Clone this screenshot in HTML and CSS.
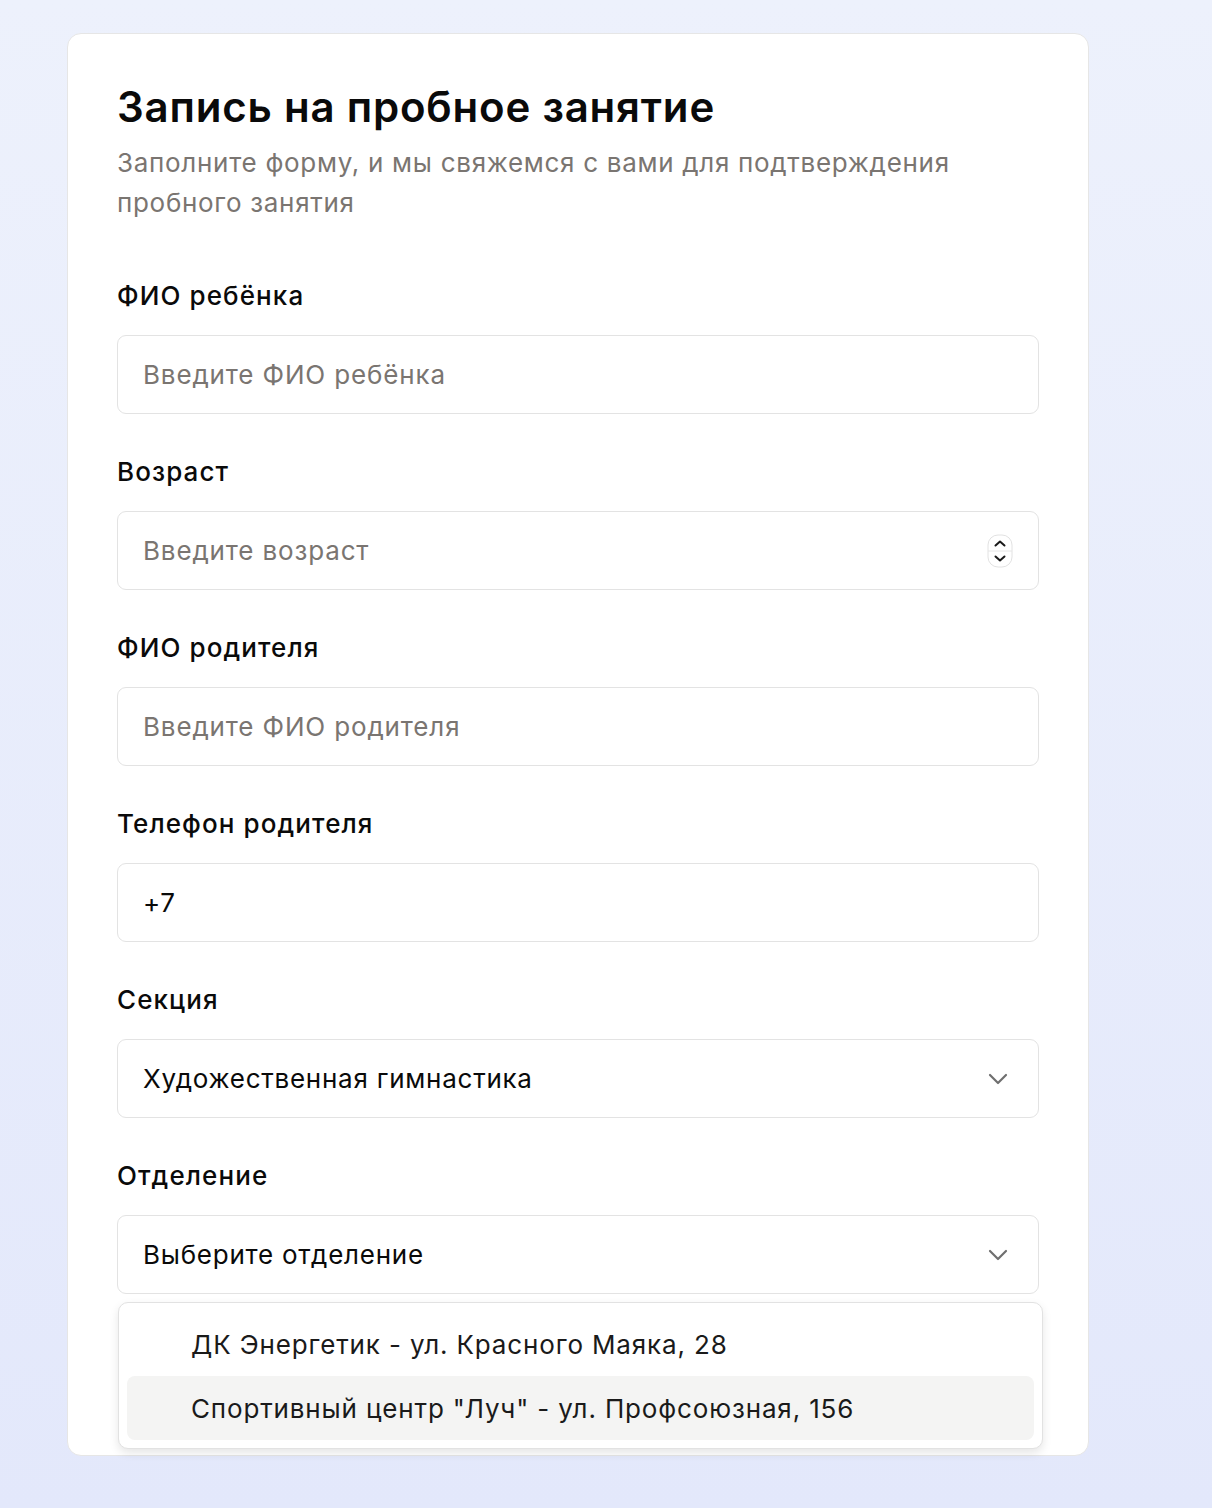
FILE: index.html
```html
<!DOCTYPE html>
<html lang="ru">
<head>
<meta charset="utf-8">
<title>Запись на пробное занятие</title>
<link rel="stylesheet" href="styles.css">
</head>
<body>
<main class="page">
  <form class="card">
    <h1 class="title">Запись на пробное занятие</h1>
    <p class="subtitle">Заполните форму, и мы свяжемся с вами для подтверждения пробного занятия</p>

    <div class="field">
      <label class="label">ФИО ребёнка</label>
      <div class="input"><span class="placeholder">Введите ФИО ребёнка</span></div>
    </div>

    <div class="field">
      <label class="label">Возраст</label>
      <div class="input">
        <span class="placeholder">Введите возраст</span>
        <span class="spinner">
          <svg width="26" height="34" viewBox="0 0 26 34">
            <rect x="1" y="1" width="24" height="32" rx="10" fill="#fff" stroke="#e2e2e2"/>
            <line x1="1" y1="17" x2="25" y2="17" stroke="#e6e6e6"/>
            <path d="M8.5 11.5 L13 7.5 L17.5 11.5" fill="none" stroke="#1a1a1a" stroke-width="2" stroke-linecap="round" stroke-linejoin="round"/>
            <path d="M8.5 22.5 L13 26.5 L17.5 22.5" fill="none" stroke="#1a1a1a" stroke-width="2" stroke-linecap="round" stroke-linejoin="round"/>
          </svg>
        </span>
      </div>
    </div>

    <div class="field">
      <label class="label">ФИО родителя</label>
      <div class="input"><span class="placeholder">Введите ФИО родителя</span></div>
    </div>

    <div class="field">
      <label class="label">Телефон родителя</label>
      <div class="input"><span class="value">+7</span></div>
    </div>

    <div class="field">
      <label class="label">Секция</label>
      <div class="input select">
        <span class="value">Художественная гимнастика</span>
        <svg class="chev" width="20" height="12" viewBox="0 0 20 12"><path d="M2 2 L10 10 L18 2" fill="none" stroke="#6f6f6f" stroke-width="2.2" stroke-linecap="round" stroke-linejoin="round"/></svg>
      </div>
    </div>

    <div class="field last">
      <label class="label">Отделение</label>
      <div class="input select">
        <span class="value">Выберите отделение</span>
        <svg class="chev" width="20" height="12" viewBox="0 0 20 12"><path d="M2 2 L10 10 L18 2" fill="none" stroke="#6f6f6f" stroke-width="2.2" stroke-linecap="round" stroke-linejoin="round"/></svg>
      </div>
      <ul class="menu">
        <li class="option">ДК Энергетик - ул. Красного Маяка, 28</li>
        <li class="option active">Спортивный центр "Луч" - ул. Профсоюзная, 156</li>
      </ul>
    </div>
  </form>
</main>
</body>
</html>
```

FILE: styles.css
```css
* { box-sizing: border-box; }
html, body { margin: 0; padding: 0; }
body {
  min-height: 1508px;
  background: linear-gradient(180deg, #edf1fc 0%, #e3e8fb 100%);
  font-family: Inter, "Noto Sans", sans-serif;
  color: #0a0a0a;
}
.page {
  padding: 33px 0 0 67px;
}
.card {
  width: 1022px;
  background: #fff;
  border: 1px solid #e6e6e6;
  border-radius: 14px;
  padding: 48px 49px 161px;
  display: flex;
  flex-direction: column;
}
.title {
  margin: 0;
  font-size: 42px;
  font-weight: 600;
  letter-spacing: 0.8px;
  line-height: 50px;
  color: #0a0a0a;
}
.subtitle {
  margin: 11px 0 0;
  font-size: 26px;
  line-height: 40px;
  color: #7a7571;
  max-width: 880px;
  letter-spacing: 0.7px;
}
.field {
  display: flex;
  flex-direction: column;
  margin-top: 55px;
  position: relative;
}
.field + .field { margin-top: 40px; }
.label {
  font-size: 26px;
  font-weight: 500;
  line-height: 36px;
  color: #0a0a0a;
  margin-bottom: 21px;
  letter-spacing: 1.1px;
}
.input {
  height: 79px;
  border: 1px solid #e3e3e3;
  border-radius: 9px;
  padding: 0 24px 0 25px;
  display: flex;
  align-items: center;
  justify-content: space-between;
  font-size: 26px;
  background: #fff;
}
.placeholder { color: #7a7571; letter-spacing: 0.85px; }
.value { color: #0a0a0a; letter-spacing: 0.75px; }
.spinner { display: flex; margin-right: 1px; }
.chev { margin-right: 6px; }
.menu {
  position: absolute;
  left: 1px;
  top: 144px;
  width: 925px;
  margin: 0;
  padding: 9px 8px 8px;
  list-style: none;
  background: #fff;
  border: 1px solid #e2e2e2;
  border-radius: 10px;
  box-shadow: 0 4px 10px rgba(0,0,0,0.10);
  z-index: 2;
}
.option {
  height: 64px;
  display: flex;
  align-items: center;
  padding-left: 64px;
  font-size: 26px;
  color: #1a1a1a;
  border-radius: 8px;
  letter-spacing: 0.85px;
}
.option.active { background: #f4f4f3; }
```
